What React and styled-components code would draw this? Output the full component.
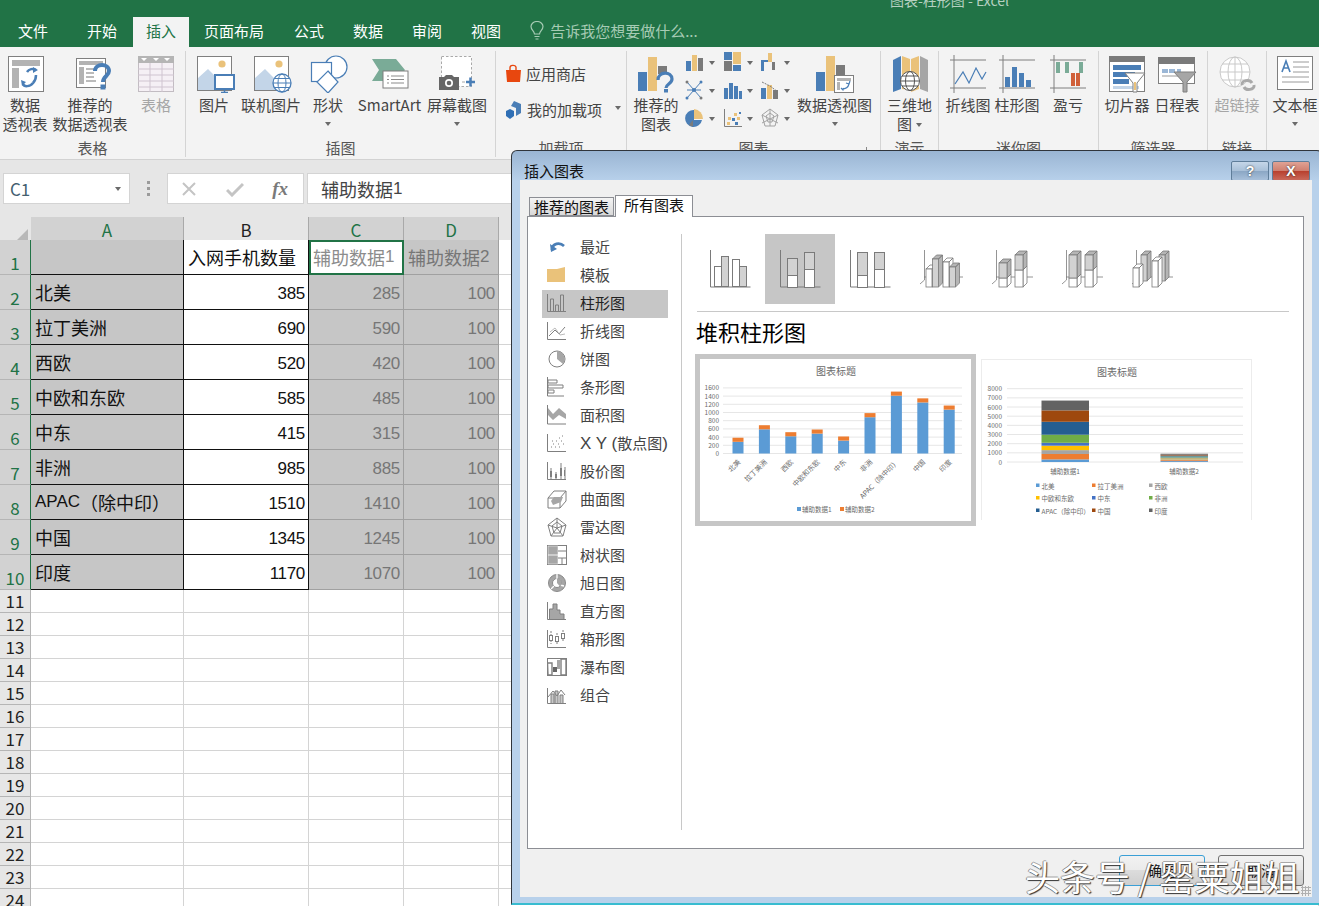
import React from "react";
import styled, { createGlobalStyle } from "styled-components";

const GlobalStyle = createGlobalStyle`
  html, body { margin: 0; padding: 0; overflow: hidden; background: #fff; }
  body { font-family: "Noto Sans CJK SC", "Liberation Sans", sans-serif; }
  * { box-sizing: border-box; }
`;

const Page = styled.div`
  position: relative;
  width: 1319px;
  height: 906px;
  overflow: hidden;
  background: #fff;
`;

/* title + tabs */
const TopBar = styled.div`
  height: 47px;
  background: #217346;
  display: flex;
  flex-direction: column;
`;
const TitleRow = styled.div`
  height: 17px;
  padding-left: 890px;
  line-height: 0;
  font-size: 14px;
  color: #b5d0c0;
`;
const TabBar = styled.div`
  height: 30px;
  display: flex;
  align-items: stretch;
`;
const Tab = styled.div`
  display: flex;
  align-items: center;
  padding: 0 ${p => p.$right ?? 15}px 4px ${p => p.$left ?? 15}px;
  font-size: 15px;
  color: ${p => (p.$active ? "#217346" : "#fff")};
  background: ${p => (p.$active ? "#f3f3f3" : "transparent")};
`;
const TellMe = styled.div`
  display: flex;
  align-items: center;
  gap: 6px;
  margin-left: 14px;
  padding-bottom: 4px;
  font-size: 15px;
  color: #a6cbb4;
`;

/* ribbon */
const Ribbon = styled.div`
  height: 113px;
  padding-top: 4px;
  display: flex;
  background: #f3f3f3;
  border-bottom: 1px solid #d2d2d2;
  overflow: hidden;
`;
const Group = styled.div`
  position: relative;
  width: ${p => p.$w}px;
  flex: none;
  height: 106px;
  display: flex;
  flex-direction: column;
  border-right: ${p => (p.$last ? "none" : "1px solid #d4d4d4")};
`;
const GroupBody = styled.div`
  flex: 1;
  display: flex;
  padding-left: ${p => p.$pad || 0}px;
`;
const GroupLabel = styled.div`
  height: 18px;
  line-height: 18px;
  text-align: center;
  font-size: 15px;
  color: #555;
`;
const Launcher = styled.div`
  position: absolute;
  right: 7px;
  bottom: 3px;
  width: 7px;
  height: 7px;
  border-left: 1px solid #888;
  border-bottom: 1px solid #888;
`;
const RibbonButton = styled.div`
  width: ${p => p.$w}px;
  flex: none;
  padding-top: 3px;
  display: flex;
  flex-direction: column;
  align-items: center;
  font-size: 15px;
  line-height: 19px;
  white-space: nowrap;
  color: ${p => (p.$off ? "#a6a6a6" : "#444")};
`;
const IconSlot = styled.div`
  height: 39px;
  margin-bottom: 2px;
  padding-left: ${p => p.$dx || 0}px;
  display: flex;
  align-items: center;
  justify-content: center;
`;
const Caret = styled.span`
  display: ${p => (p.$inline ? "inline-block" : "block")};
  width: 0;
  height: 0;
  margin: ${p => (p.$inline ? "0 0 3px 4px" : "8px 0")};
  border-left: 3.5px solid transparent;
  border-right: 3.5px solid transparent;
  border-top: 4px solid #6a6a6a;
`;
const AddinList = styled.div`
  padding: 11px 0 0 9px;
  display: flex;
  flex-direction: column;
  gap: 14px;
`;
const AddinRow = styled.div`
  height: 22px;
  display: flex;
  align-items: center;
  gap: 4px;
  font-size: 15px;
  color: #444;
  white-space: nowrap;
`;
const MiniGrid = styled.div`
  width: 107px;
  flex: none;
  display: grid;
  grid-template-columns: repeat(3, 37.5px);
  grid-auto-rows: 28px;
`;
const MiniCell = styled.div`
  display: flex;
  align-items: flex-start;
  gap: 2px;
  padding-top: 1px;
  ${Caret} { margin: 9px 0 0 2px; }
`;

/* formula bar */
const FormulaBar = styled.div`
  height: 57px;
  padding: 13px 0 0 3px;
  display: flex;
  align-items: flex-start;
  background: #e6e6e6;
`;
const NameBox = styled.div`
  width: 127px;
  height: 31px;
  padding: 0 8px 0 6px;
  display: flex;
  align-items: center;
  justify-content: space-between;
  background: #fff;
  border: 1px solid #d4d4d4;
  font-size: 17px;
  color: #44606f;
  ${Caret} { margin: 0; }
`;
const GripDots = styled.div`
  width: 37px;
  height: 31px;
  display: flex;
  flex-direction: column;
  align-items: center;
  justify-content: center;
  gap: 3px;
`;
const GripDot = styled.span`
  width: 3px;
  height: 3px;
  background: #9b9b9b;
`;
const FxBox = styled.div`
  width: 137px;
  height: 31px;
  padding: 0 15px 0 13px;
  display: flex;
  align-items: center;
  justify-content: space-between;
  background: #fff;
  border: 1px solid #d4d4d4;
`;
const FxGlyph = styled.span`
  font-family: "Liberation Serif", serif;
  font-style: italic;
  font-weight: 700;
  font-size: 19px;
  color: #7a7a7a;
`;
const FormulaInput = styled.div`
  flex: 1;
  height: 31px;
  margin-left: 3px;
  padding-left: 13px;
  display: flex;
  align-items: center;
  background: #fff;
  border: 1px solid #d4d4d4;
  font-size: 18px;
  color: #444;
`;

/* sheet */
const Sheet = styled.div`
  display: flex;
  flex-direction: column;
`;
const SheetRow = styled.div`
  display: grid;
  grid-template-columns: 31px 153px 125px 95px 95px 1fr;
  height: ${p => p.$h}px;
`;
const Corner = styled.div`
  background: #e6e6e6;
  display: flex;
  align-items: flex-end;
  justify-content: flex-end;
  padding: 0 3px 3px 0;
`;
const ColHead = styled.div`
  display: flex;
  align-items: center;
  justify-content: center;
  padding-bottom: 2px;
  font-size: 17px;
  background: ${p => (p.$on ? "#d2d2d2" : "#e6e6e6")};
  color: ${p => (p.$on ? "#217346" : "#222")};
  border-right: 1px solid #a9a9a9;
  border-bottom: 2px solid ${p => (p.$on ? "#217346" : "#a9a9a9")};
`;
const RowHead = styled.div`
  display: flex;
  align-items: flex-end;
  justify-content: center;
  font-size: 17px;
  line-height: 22px;
  background: ${p => (p.$on ? "#d2d2d2" : "#e6e6e6")};
  color: ${p => (p.$on ? "#217346" : "#222")};
  border-bottom: 1px solid #b5b5b5;
  border-right: 1px solid ${p => (p.$on ? "#217346" : "#b5b5b5")};
`;
const Cell = styled.div`
  display: flex;
  align-items: flex-end;
  justify-content: ${p => (p.$num ? "flex-end" : "flex-start")};
  padding: 0 ${p => (p.$num ? 3 : 4)}px ${p => (p.$num ? 2 : 4)}px 4px;
  white-space: nowrap;
  overflow: hidden;
  background: ${p => (p.$sel ? "#c6c6c6" : "#fff")};
  color: ${p => p.$color || "#111"};
  font-family: ${p => (p.$num ? '"Liberation Sans"' : '"Noto Sans CJK SC"')}, sans-serif;
  font-size: ${p => (p.$num ? 17 : 18)}px;
  letter-spacing: ${p => (p.$num ? "-0.3px" : "0")};
  line-height: 26px;
  border-right: 1px solid ${p => p.$line || "#d4d4d4"};
  border-bottom: 1px solid ${p => p.$line || "#d4d4d4"};
`;
const ActiveCell = styled(Cell)`
  background: #fff;
  border: 2px solid #217346;
  box-shadow: inset 0 0 0 1px #fff;
  padding: 0 2px 3px 2px;
`;
const Latin = styled.span`
  font-family: "Liberation Sans", sans-serif;
  font-size: 17px;
`;

/* dialog */
const Dialog = styled.div`
  position: absolute;
  left: 511px;
  top: 150px;
  width: 812px;
  height: 755px;
  padding: 0 10px 6px 8px;
  display: flex;
  flex-direction: column;
  background: linear-gradient(180deg, #9ab5d3 0, #b8d1eb 30px, #b8d1eb 100%);
  border: 1px solid #30353b;
  border-bottom: 2px solid #38bcd0;
  border-radius: 6px 6px 0 0;
`;
const DialogHead = styled.div`
  height: 29px;
  flex: none;
  padding: 10px 2px 0 4px;
  display: flex;
  align-items: flex-start;
  justify-content: space-between;
  font-size: 15px;
  line-height: 20px;
  color: #111;
`;
const WindowButtons = styled.div`
  display: flex;
  gap: 3px;
`;
const WindowButton = styled.div`
  width: 38px;
  height: 20px;
  display: flex;
  align-items: center;
  justify-content: center;
  border: 1px solid #5f7d99;
  border-radius: 2px;
  font-family: "Liberation Sans", sans-serif;
  font-weight: 700;
  font-size: 14px;
  color: #fff;
  text-shadow: 0 0 2px #222;
  background: ${p =>
    p.$close
      ? "linear-gradient(180deg, #e0a294 0, #d08070 48%, #b83f2d 50%, #c9695a 100%)"
      : "linear-gradient(180deg, #c5d6e8 0, #a9c0d8 48%, #8aa6c4 50%, #a8c0da 100%)"};
`;
const DialogBody = styled.div`
  position: relative;
  flex: 1;
  padding: 15px 8px 0 7px;
  display: flex;
  flex-direction: column;
  background: #f0f0f0;
`;
const TabStrip = styled.div`
  height: 21px;
  flex: none;
  padding-left: 2px;
  display: flex;
  align-items: flex-end;
`;
const DialogTab = styled.div`
  height: ${p => (p.$active ? 22 : 19)}px;
  margin-bottom: ${p => (p.$active ? -1 : 0)}px;
  padding: 0 ${p => (p.$active ? 8 : 4)}px;
  margin-right: 1px;
  font-size: 15px;
  line-height: 18px;
  color: #111;
  white-space: nowrap;
  position: relative;
  z-index: 1;
  border: 1px solid #8c8e94;
  border-bottom: ${p => (p.$active ? "none" : "1px solid #8c8e94")};
  background: ${p => (p.$active ? "#fff" : "linear-gradient(180deg, #f4f4f4, #d9d9d9)")};
`;
const Panel = styled.div`
  height: 633px;
  flex: none;
  padding-top: 17px;
  display: flex;
  background: #fff;
  border: 1px solid #8c8e94;
`;
const SideList = styled.div`
  width: 154px;
  height: 596px;
  flex: none;
  padding-left: 14px;
  border-right: 1px solid #c8c8c8;
`;
const SideItem = styled.div`
  width: 126px;
  height: 28px;
  padding: 0 0 3px 5px;
  display: flex;
  align-items: center;
  gap: 13px;
  font-size: 15px;
  color: ${p => (p.$active ? "#222" : "#444")};
  background: ${p => (p.$active ? "#c6c6c6" : "transparent")};
  white-space: nowrap;
`;
const SideIcon = styled.span`
  width: 20px;
  height: 20px;
  flex: none;
  display: flex;
`;
const ChartArea = styled.div`
  flex: 1;
  padding-left: 13px;
  display: flex;
  flex-direction: column;
`;
const TypeRow = styled.div`
  display: flex;
`;
const TypeCell = styled.div`
  width: 70px;
  height: 70px;
  background: ${p => (p.$active ? "#c6c6c6" : "transparent")};
`;
const Rule = styled.div`
  height: 1px;
  margin: 7px 14px 0 2px;
  background: #c8c8c8;
`;
const ChartTitle = styled.div`
  height: 42px;
  padding: 0 0 4px 1px;
  display: flex;
  align-items: center;
  font-size: 22px;
  color: #000;
`;
const PreviewRow = styled.div`
  display: flex;
  gap: 5px;
`;
const Preview = styled.div`
  height: ${p => (p.$active ? 172 : 161)}px;
  margin-top: ${p => (p.$active ? 0 : 5)}px;
  border: ${p => (p.$active ? "5px solid #c6c6c6" : "1px solid #ececec")};
  border-bottom: ${p => (p.$active ? "5px solid #c6c6c6" : "none")};
  background: #fff;
  display: flex;
`;
const Footer = styled.div`
  flex: 1;
  padding: 6px 0 0;
  display: flex;
  justify-content: flex-end;
  gap: 13px;
`;
const DialogButton = styled.div`
  width: 86px;
  height: 31px;
  padding-bottom: 2px;
  display: flex;
  align-items: center;
  justify-content: center;
  font-size: 14px;
  color: #111;
  border-radius: 3px;
  border: 1px solid ${p => (p.$primary ? "#3a9fd6" : "#707070")};
  background: linear-gradient(180deg, #f2f2f2 0, #ebebeb 48%, #dcdcdc 50%, #cfcfcf 100%);
`;
const ResizeGrip = styled.div`
  position: absolute;
  right: 1px;
  bottom: 1px;
  width: 10px;
  height: 10px;
  background-image: radial-gradient(#b0b0b0 1px, transparent 1.2px);
  background-size: 3px 3px;
`;
const Watermark = styled.div`
  position: absolute;
  left: 1025px;
  top: 852px;
  font-size: 35px;
  line-height: 48px;
  white-space: nowrap;
  color: #fff;
  text-shadow: 1px 1px 1px #333, -1px 0 0 rgba(80, 80, 80, 0.6), 0 -1px 0 rgba(80, 80, 80, 0.45);
`;

/* ---- drawings ---- */
const G = "#7f7f7f";
const BLUE = "#4a7eb6";
const ORANGE = "#eac27a";
const DARK = "#7a7a7a";
const LBLUE = "#c3d5e8";

const Ic = ({ w = 38, h = 38, children }) => (
  <svg width={w} height={h} viewBox={`0 0 ${w} ${h}`} fill="none">{children}</svg>
);

const PivotIcon = () => (
  <Ic>
    <rect x="1.5" y="1.5" width="35" height="35" fill="#fff" stroke={G} />
    <rect x="5" y="5" width="28" height="6" fill="#b3b3b3" />
    <rect x="5" y="13" width="7" height="20" fill="#b3b3b3" />
    <path d="M16 29c1 3 7 3 10-1M29 15c-3-2-7-1-9 2M29 20c0 3-1 6-3 8" stroke={BLUE} strokeWidth="2.5" />
    <path d="M26 12l5 3-5 3zM15 31l-1-6 5 2z" fill={BLUE} />
  </Ic>
);
const RecoPivotIcon = () => (
  <Ic>
    <rect x="1.5" y="3.5" width="29" height="29" fill="#fff" stroke={G} />
    <rect x="4" y="6" width="24" height="4" fill="#b3b3b3" />
    <rect x="4" y="12" width="5" height="17" fill="#b3b3b3" />
    <path d="M11 14h10M11 18h8M11 22h8M11 26h10" stroke="#bbb" strokeWidth="2" />
    <path d="M20 16c0-8 14-8 14 0 0 5-6 5-6 11" stroke={BLUE} strokeWidth="4" />
    <rect x="25.5" y="29.5" width="5" height="5" fill={BLUE} />
  </Ic>
);
const TableIcon = () => (
  <Ic>
    <rect x="1.5" y="1.5" width="35" height="35" fill="#f5f0f5" stroke="#c2bcc2" />
    <rect x="1" y="1" width="36" height="7" fill="#b5b5b5" />
    <path d="M4 3h6l-3 3zM16 3h6l-3 3zM27 3h6l-3 3z" fill="#fff" />
    <path d="M1 14h36M1 20h36M1 26h36M1 32h36M13 8v29M25 8v29" stroke="#cfc4d0" />
  </Ic>
);
const PictureBase = () => (
  <>
    <rect x="1.5" y="1.5" width="34" height="34" fill="#fff" stroke={G} />
    <circle cx="26" cy="9" r="3.6" fill={ORANGE} />
    <path d="M2 35V23l10-9 9 9h5v12z" fill={LBLUE} />
  </>
);
const PictureIcon = () => (
  <Ic w={40}>
    <PictureBase />
    <rect x="19" y="20" width="19" height="14" fill="#fff" stroke={BLUE} strokeWidth="2" />
    <path d="M28.5 34v3M25 37.5h7" stroke={BLUE} strokeWidth="1.5" />
  </Ic>
);
const OnlinePictureIcon = () => (
  <Ic w={40}>
    <PictureBase />
    <circle cx="29" cy="28" r="9" fill="#fff" stroke={BLUE} strokeWidth="1.3" />
    <ellipse cx="29" cy="28" rx="4" ry="9" stroke={BLUE} />
    <path d="M20 28h18M21.5 23.5h15M21.5 32.5h15" stroke={BLUE} />
  </Ic>
);
const ShapesIcon = () => (
  <Ic w={40}>
    <circle cx="26" cy="12" r="11" fill="#fff" stroke={BLUE} strokeWidth="1.2" />
    <rect x="1.5" y="7.5" width="20" height="19" fill="#fff" stroke={BLUE} strokeWidth="1.2" />
    <path d="M18 16l10 11-10 11-11-11z" fill="#fff" stroke={BLUE} strokeWidth="1.2" />
  </Ic>
);
const SmartArtIcon = () => (
  <Ic>
    <path d="M1 4h24l9 11-9 11H1l7-11z" fill="#7aab97" />
    <rect x="12" y="16" width="25" height="17" fill="#fff" stroke={G} />
    <path d="M16 21h2M16 24.5h2M16 28h2M20 21h13M20 24.5h13M20 28h13" stroke="#8b8b8b" />
  </Ic>
);
const ScreenshotIcon = () => (
  <Ic>
    <rect x="3.5" y="1.5" width="30" height="30" fill="#fff" stroke="#a9a9a9" strokeDasharray="2.5 2" />
    <path d="M1 22h5l2-2h6l2 2h5v13H1z" fill="#666" />
    <circle cx="11" cy="28" r="4" fill="#fff" />
    <circle cx="11" cy="28" r="2.3" fill="#666" />
    <path d="M24 27h3" stroke="#a9a9a9" />
    <path d="M28 27h9M32.5 22.5v9" stroke={BLUE} strokeWidth="2.5" />
  </Ic>
);
const StoreIcon = () => (
  <Ic w={17} h={19}>
    <path d="M1 6h15l-1 12H2z" fill="#e8470f" />
    <path d="M5 7V3.5C5 1 10 .5 11 3v4" stroke="#e8470f" strokeWidth="1.4" />
  </Ic>
);
const AddinIcon = () => (
  <Ic w={18} h={19}>
    <path d="M9 1l7 3v9l-5 3V8L6 6z" fill={BLUE} />
    <path d="M1 11l4-2 4 2v5l-4 3-4-3z" fill="#2f6fb5" />
  </Ic>
);
const RecoChartIcon = () => (
  <Ic>
    <rect x="1" y="17" width="9" height="19" fill={BLUE} />
    <rect x="11" y="2" width="9" height="34" fill={ORANGE} />
    <rect x="21" y="11" width="9" height="8" fill={DARK} />
    <path d="M21 25c0-9 14-9 14-1 0 5-6 5-6 9" stroke={BLUE} strokeWidth="3.2" />
    <rect x="27" y="34" width="4" height="3.5" fill={BLUE} />
  </Ic>
);
const PivotChartIcon = () => (
  <Ic w={40}>
    <rect x="1" y="17" width="9" height="19" fill={BLUE} />
    <rect x="11" y="1" width="9" height="35" fill={ORANGE} />
    <rect x="21" y="10" width="9" height="26" fill={DARK} />
    <rect x="19.5" y="20.5" width="19" height="17" fill="#fff" stroke={G} />
    <rect x="22" y="23" width="14" height="3" fill="#b3b3b3" />
    <rect x="22" y="27" width="3" height="8" fill="#b3b3b3" />
    <path d="M27 34c3 0 6-1 7-5M31 28l3 1 1-3M26 33l2 2 1-2" stroke={BLUE} strokeWidth="1.2" />
  </Ic>
);
const MapIcon = () => (
  <Ic>
    <path d="M2 5l8-4v33l-8 3z" fill={BLUE} />
    <path d="M11 1l8 3v31l-8-1z" fill={ORANGE} />
    <path d="M20 4l8-3v33l-8 3z" fill={ORANGE} />
    <path d="M29 1l8 4v32l-8-3z" fill="#a6a6a6" />
    <circle cx="19" cy="26" r="9.5" fill="#fff" stroke="#555" />
    <ellipse cx="19" cy="26" rx="4.5" ry="9.5" stroke="#555" />
    <path d="M10 26h18M11 21h16M11 31h16" stroke="#555" />
  </Ic>
);
const SparkFrame = ({ children }) => (
  <Ic h={40}>
    <path d="M1 6h36M1 34h36M5 1v38" stroke={G} />
    {children}
  </Ic>
);
const SparkLineIcon = () => (
  <SparkFrame><path d="M6 30l8-12 6 11 7-15 6 11 4-7" stroke={BLUE} strokeWidth="1.2" /></SparkFrame>
);
const SparkBarIcon = () => (
  <SparkFrame>
    <path d="M7 33V23h5v10zM14 33V13h5v20zM21 33V19h5v14zM28 33V26h5v7z" fill={BLUE} />
  </SparkFrame>
);
const SparkWinIcon = () => (
  <SparkFrame>
    <path d="M7 8h4v11H7zM16 8h4v11h-4zM30 8h4v11h-4z" fill="#7aab97" />
    <path d="M22 19h4v13h-4zM27 19h4v13h-4z" fill="#d0603a" />
  </SparkFrame>
);
const SlicerIcon = () => (
  <Ic>
    <rect x="1.5" y="1.5" width="35" height="35" fill="#fff" stroke={G} />
    <rect x="1" y="1" width="36" height="6" fill="#7a7a7a" />
    <rect x="5" y="10" width="28" height="5" fill={BLUE} />
    <rect x="5" y="17" width="22" height="5" fill={BLUE} />
    <rect x="5" y="24" width="16" height="5" fill={BLUE} />
    <rect x="5" y="31" width="26" height="3" fill={LBLUE} />
    <path d="M17 18h20l-8 10v9h-4v-9z" fill="#fff" stroke={G} />
    <path d="M27 27v8" stroke={ORANGE} strokeWidth="2" />
  </Ic>
);
const TimelineIcon = () => (
  <Ic w={40}>
    <rect x="1.5" y="2.5" width="36" height="26" fill="#fff" stroke={G} />
    <rect x="1" y="2" width="37" height="7" fill="#7a7a7a" />
    <path d="M5 14h6v4H5zM12 14h6v4h-6zM20 14h4v4h-4z" fill="#9bb7d6" />
    <path d="M5 21h30" stroke="#ccc" strokeWidth="2" />
    <path d="M17 17h22l-9 10v10h-4V27z" fill="#a6a6a6" stroke={G} />
  </Ic>
);
const LinkIcon = () => (
  <Ic>
    <circle cx="17" cy="17" r="15" fill="#fff" stroke="#c9c9c9" />
    <ellipse cx="17" cy="17" rx="7" ry="15" stroke="#c9c9c9" />
    <path d="M2 17h30M4 9h26M4 25h26M17 2v30" stroke="#c9c9c9" />
    <path d="M24 30c-1-5 8-6 10-2M36 30c1 5-8 6-10 2" stroke="#a9a9a9" strokeWidth="3" />
  </Ic>
);
const TextBoxIcon = () => (
  <Ic>
    <rect x="1.5" y="1.5" width="35" height="33" fill="#fff" stroke={G} />
    <path d="M6 17l4-11 4 11M7.500 13h5" stroke={BLUE} strokeWidth="1.6" />
    <path d="M17 7h16M17 12h16M17 17h16M6 22h27M6 27h27" stroke="#9a9a9a" />
  </Ic>
);

/* 9 small chart buttons */
const Mini = ({ children }) => <Ic w={20} h={20}>{children}</Ic>;
const miniIcons = [
  <Mini key="a"><rect x="1" y="9" width="5" height="10" fill={BLUE} /><rect x="7" y="3" width="5" height="16" fill={ORANGE} /><rect x="13" y="6" width="5" height="13" fill={DARK} /></Mini>,
  <Mini key="b"><rect x="1" y="0" width="8" height="8" fill={BLUE} /><rect x="1" y="9" width="8" height="10" fill={DARK} /><rect x="10" y="0" width="8" height="12" fill={ORANGE} /><rect x="10" y="13" width="8" height="6" fill={BLUE} /></Mini>,
  <Mini key="c"><rect x="1" y="8" width="3" height="11" fill={BLUE} /><rect x="4" y="8" width="4" height="2" fill={BLUE} /><rect x="8" y="1" width="4" height="9" fill={ORANGE} /><rect x="12" y="10" width="3" height="8" fill={DARK} /></Mini>,
  <Mini key="d"><path d="M2 2l7 8 7 8M2 18l7-8 7-8M2 10h14" stroke={BLUE} strokeWidth="1" /><circle cx="9" cy="10" r="2" fill={BLUE} /><circle cx="2" cy="2" r="1.5" fill={DARK} /><circle cx="16" cy="18" r="1.5" fill={DARK} /><circle cx="16" cy="2" r="1.5" fill={BLUE} /><circle cx="2" cy="18" r="1.5" fill={BLUE} /></Mini>,
  <Mini key="e"><rect x="1" y="8" width="4" height="11" fill={BLUE} /><rect x="6" y="3" width="4" height="16" fill={BLUE} /><rect x="11" y="6" width="4" height="13" fill={BLUE} /><rect x="16" y="11" width="3" height="8" fill={BLUE} /></Mini>,
  <Mini key="f"><rect x="1" y="8" width="5" height="11" fill={BLUE} /><rect x="7" y="5" width="5" height="14" fill={ORANGE} /><rect x="13" y="10" width="5" height="9" fill={DARK} /><path d="M2 2l8 4 8 6" stroke={DARK} strokeDasharray="2 1" /></Mini>,
  <Mini key="g"><path d="M9 2a8.500 8.500 0 1 0 8 10H9z" fill={BLUE} /><path d="M9 1v10h9A9.500 9.500 0 0 0 9 1z" fill={ORANGE} /><path d="M8 12L4 17a8 8 0 0 0 4 1.500z" fill={DARK} /></Mini>,
  <Mini key="h"><path d="M1.500 1v17.500H19" stroke={G} /><path d="M5 9h3v3H5zM11 5h3v3h-3zM14 9h3v3h-3zM4 14h3v3H4z" fill={ORANGE} /><path d="M9 10h3v3H9zM12 14h3v3h-3zM16 4h2v2h-2z" fill={BLUE} /></Mini>,
  <Mini key="i"><path d="M10 1l8 6-3 11H5L2 7z M10 5l4 3-2 6H8L6 8zM10 1v17M2 7l16 8M18 7L2 15" stroke="#a2a2a2" strokeWidth="1" /></Mini>,
];

/* dialog left list icons */
const Si = ({ children }) => (
  <SideIcon><svg width="20" height="20" viewBox="0 0 20 20" fill="none">{children}</svg></SideIcon>
);
const GF = "#a6a6a6";
const sideItems = [
  ["最近", <Si key="0"><path d="M4 14c0-7 8-8 12-4" stroke={BLUE} strokeWidth="2.600" transform="translate(1 -1)" /><path d="M3 7l1 8 6-3z" fill={BLUE} /></Si>],
  ["模板", <Si key="1"><path d="M0 4h10l8-2v15H0z" fill={ORANGE} /></Si>],
  ["柱形图", <Si key="2"><path d="M.5 1v17.500H19" stroke={G} /><path d="M3.500 18V6h3v12M8.500 18v-6h3v6M13.500 18V2h3v16" stroke={G} /></Si>],
  ["折线图", <Si key="3"><path d="M.5 1v17.500H19" stroke={G} /><path d="M2 15l6-6 4 4 6-7" stroke={G} /><path d="M3 11l5-4 5 7 5-1" stroke="#bbb" /></Si>],
  ["饼图", <Si key="4"><circle cx="10" cy="10" r="8" stroke={G} /><path d="M10 2a8 8 0 0 1 6 13l-6-5z" fill={GF} /></Si>],
  ["条形图", <Si key="5"><path d="M.5 0v19H17" stroke={G} /><path d="M1 3h9v3H1zM1 8h15v3H1zM1 13h6v3H1z" stroke={G} /></Si>],
  ["面积图", <Si key="6"><path d="M.5 0v19H19" stroke={G} /><path d="M1 3l5 6 6-6 7 6v5l-7-4-6 5-5-5z" fill={GF} /></Si>],
  ["XY", <Si key="7"><path d="M.5 1v17.500H19" stroke={G} /><path d="M4 14h1M6 11h1M9 8h1M12 5h1M15 3h1M8 14h1M11 11h1M14 8h1M5 8h1M12 14h1M16 11h1" stroke={G} strokeDasharray="1 1" /></Si>],
  ["股价图", <Si key="8"><path d="M.5 1v17.500H19" stroke={G} /><path d="M4 7v11M9 11v7M14 2v16M18 6v12" stroke={G} /><path d="M3 10h2v6H3zM8 13h2v4H8zM13 7h2v8h-2zM17 9h1v6h-1z" fill={G} /></Si>],
  ["曲面图", <Si key="9"><path d="M1 9L7 2h12v10l-6 7H1zM1 9h12v10M13 9l6-7" stroke={G} /><path d="M4 12l3-4h9l-2 5-8 3z" fill={GF} /></Si>],
  ["雷达图", <Si key="10"><path d="M10 1l9 7-3 11H4L1 8zM10 5l5 4-2 7H7L5 9zM10 1v10M1 8l9 3 9-3M4 19l6-8 6 8" stroke={G} /></Si>],
  ["树状图", <Si key="11"><rect x=".5" y=".5" width="19" height="19" stroke={G} /><path d="M1 1h10v9H1zM1 10h10v9H1z" fill={GF} stroke="#fff" strokeWidth=".5" /><path d="M11 6h8M11 13h8M15 13v6" stroke={G} /></Si>],
  ["旭日图", <Si key="12"><circle cx="10" cy="10" r="8.500" fill={GF} stroke="#8a8a8a" /><circle cx="10" cy="10" r="4.500" fill="#fff" stroke="#8a8a8a" /><path d="M10 1v5M4 16l3-3M17 13l-4-1" stroke="#fff" strokeWidth="1.300" /><path d="M10 10V5.500a4.500 4.500 0 0 1 3 8z" fill={GF} /></Si>],
  ["直方图", <Si key="13"><path d="M.5 1v17.500H19" stroke={G} /><path d="M2.500 18V8h3.500V3h4v6h3v4h4v5" fill={GF} stroke={G} /></Si>],
  ["箱形图", <Si key="14"><path d="M.5 1v17.500H19" stroke={G} /><path d="M4 2v13M10 4v12M16 1v12" stroke={G} strokeDasharray="2 1" /><rect x="2.500" y="6.500" width="3" height="5" fill="#fff" stroke={G} /><rect x="8.500" y="7.500" width="3" height="5" fill="#fff" stroke={G} /><rect x="14.500" y="4.500" width="3" height="5" fill="#fff" stroke={G} /></Si>],
  ["瀑布图", <Si key="15"><rect x=".5" y="1.500" width="19" height="17" stroke={G} /><path d="M.5 6H5v12H1zM14 2h5v16h-5z" stroke={G} strokeWidth="1.400" /><path d="M6 10h4v5H6z" fill="#666" /><path d="M10 3h4v9h-4z" fill={GF} /></Si>],
  ["组合", <Si key="16"><path d="M.5 3v15.500H19" stroke={G} /><path d="M4 18V9h3v9M8 18V6h3v12M13 18v-8h3v8" fill="#c8c8c8" stroke={G} /><path d="M1 12l5-6 4 5 4-6 4 5" stroke={G} /></Si>],
];

/* chart-type row */
const T = ({ children }) => <svg width="70" height="70" viewBox="0 0 70 70" fill="none">{children}</svg>;
const Axis = ({ x = 15, right = 55 }) => <path d={`M${x + 0.5} 16v37h${right - x}`} stroke={DARK} />;
const GREY = "#d2d2d2";
const Col = ({ x, top, mid, w = 10, base = 53 }) => (
  <>
    <rect x={x + 0.5} y={top + 0.5} width={w} height={mid - top} fill={GREY} stroke={DARK} />
    <rect x={x + 0.5} y={mid + 0.5} width={w} height={base - mid} fill="#fff" stroke={DARK} />
  </>
);
const Box3D = ({ x, top, bottom = 53, w = 6, fill }) => (
  <>
    <path d={`M${x} ${top}l4-4h${w}l-4 4zM${x + w} ${top}l4-4v${bottom - top}l-4 4z`} fill={fill === "#fff" ? "#fff" : "#b5b5b5"} stroke={DARK} strokeWidth=".8" />
    <rect x={x} y={top} width={w} height={bottom - top} fill={fill} stroke={DARK} strokeWidth=".8" />
  </>
);
const Axis3D = ({ x }) => <path d={`M${x + 0.5} 16v30L${x - 4} 50M${x} 43h${55 - x + 3}`} stroke={DARK} strokeWidth=".8" />;
const typeIcons = [
  <T key="0">
    <Axis />
    <rect x="19.500" y="32.500" width="7" height="20" fill="#fff" stroke={DARK} />
    <rect x="26.500" y="22.500" width="7" height="30" fill={GREY} stroke={DARK} />
    <rect x="37.500" y="25.500" width="7" height="27" fill="#fff" stroke={DARK} />
    <rect x="44.500" y="32.500" width="7" height="20" fill={GREY} stroke={DARK} />
  </T>,
  <T key="1"><Axis /><Col x={22} top={24} mid={41} /><Col x={39} top={18} mid={35} /></T>,
  <T key="2"><Axis /><Col x={22} top={18} mid={41} /><Col x={39} top={18} mid={35} /></T>,
  <T key="3">
    <Axis3D x={19} />
    <Box3D x={21} top={35} fill="#fff" /><Box3D x={27.500} top={25} fill={GREY} />
    <Box3D x={38} top={28} fill="#fff" /><Box3D x={44.500} top={33} fill={GREY} />
  </T>,
  <T key="4">
    <Axis3D x={21} />
    <Box3D x={24} w={8} top={44} fill="#fff" /><Box3D x={24} w={8} top={29} bottom={44} fill={GREY} />
    <Box3D x={40} w={8} top={36} fill="#fff" /><Box3D x={40} w={8} top={21} bottom={36} fill={GREY} />
  </T>,
  <T key="5">
    <Axis3D x={21} />
    <Box3D x={24} w={8} top={44} fill="#fff" /><Box3D x={24} w={8} top={21} bottom={44} fill={GREY} />
    <Box3D x={40} w={8} top={36} fill="#fff" /><Box3D x={40} w={8} top={21} bottom={36} fill={GREY} />
  </T>,
  <T key="6">
    <Axis3D x={21} />
    <Box3D x={26} top={21} bottom={47} fill={GREY} /><Box3D x={44} top={21} bottom={47} fill={GREY} />
    <Box3D x={18} top={34} fill="#fff" /><Box3D x={37} top={27} fill="#fff" />
  </T>,
];

/* sheet data */
const rows = [
  ["北美", 385, 285, 100],
  ["拉丁美洲", 690, 590, 100],
  ["西欧", 520, 420, 100],
  ["中欧和东欧", 585, 485, 100],
  ["中东", 415, 315, 100],
  ["非洲", 985, 885, 100],
  ["APAC（除中印）", 1510, 1410, 100],
  ["中国", 1345, 1245, 100],
  ["印度", 1170, 1070, 100],
];

const SERIES = ["#5b9bd5", "#ed7d31", "#a5a5a5", "#ffc000", "#4472c4", "#70ad47", "#255e91", "#9e480e", "#636363"];
const CHART_TEXT = { fontFamily: '"Noto Sans CJK SC", sans-serif', fontSize: 6.500, fill: "#6b6b6b" };
const ChartHeading = ({ x }) => (
  <text x={x} y="16" textAnchor="middle" style={{ ...CHART_TEXT, fontSize: 10 }}>图表标题</text>
);

const ChartByRegion = () => {
  const y0 = 94.500;
  const k = 65.600 / 1600;
  return (
    <svg width="271" height="162" viewBox="0 0 271 162">
      <ChartHeading x={136} />
      {[0, 200, 400, 600, 800, 1000, 1200, 1400, 1600].map(v => (
        <g key={v}>
          <line x1="23" x2="262" y1={y0 - v * k} y2={y0 - v * k} stroke="#e6e6e6" />
          <text x="19" y={y0 - v * k + 2.500} textAnchor="end" style={CHART_TEXT}>{v}</text>
        </g>
      ))}
      {rows.map((r, i) => {
        const cx = 38 + i * 26.400;
        return (
          <g key={r[0]}>
            <rect x={cx - 5.500} y={y0 - r[2] * k} width="11" height={r[2] * k} fill={SERIES[0]} />
            <rect x={cx - 5.500} y={y0 - (r[2] + r[3]) * k} width="11" height={r[3] * k} fill={SERIES[1]} />
            <text transform={`translate(${cx + 3} ${y0 + 9}) rotate(-45)`} textAnchor="end" style={{ ...CHART_TEXT, fontSize: 7 }}>{r[0]}</text>
          </g>
        );
      })}
      <rect x="97" y="148" width="4" height="4" fill={SERIES[0]} />
      <text x="102" y="152.500" style={CHART_TEXT}>辅助数据1</text>
      <rect x="140" y="148" width="4" height="4" fill={SERIES[1]} />
      <text x="145" y="152.500" style={CHART_TEXT}>辅助数据2</text>
    </svg>
  );
};

const ChartBySeries = () => {
  const y0 = 102;
  const k = 73.300 / 8000;
  const stack = (x, pick) => {
    let acc = 0;
    return rows.map((r, i) => {
      const h = pick(r) * k;
      const y = y0 - (acc + pick(r)) * k;
      acc += pick(r);
      return <rect key={i} x={x} y={y} width="47.500" height={h} fill={SERIES[i]} />;
    });
  };
  const legendX = [55, 111, 168];
  return (
    <svg width="269" height="160" viewBox="1 0 269 160">
      <ChartHeading x={136} />
      {[0, 1000, 2000, 3000, 4000, 5000, 6000, 7000, 8000].map(v => (
        <g key={v}>
          <line x1="26" x2="262" y1={y0 - v * k} y2={y0 - v * k} stroke="#e6e6e6" />
          <text x="21" y={y0 - v * k + 2.500} textAnchor="end" style={CHART_TEXT}>{v}</text>
        </g>
      ))}
      {stack(60.500, r => r[2])}
      {stack(179.500, r => r[3])}
      <text x="84" y="114" textAnchor="middle" style={CHART_TEXT}>辅助数据1</text>
      <text x="203" y="114" textAnchor="middle" style={CHART_TEXT}>辅助数据2</text>
      {rows.map((r, i) => {
        const x = legendX[i % 3];
        const y = 127 + Math.floor(i / 3) * 12.500;
        return (
          <g key={r[0]}>
            <rect x={x} y={y - 3.500} width="3.500" height="3.500" fill={SERIES[i]} />
            <text x={x + 5.500} y={y + 1.500} style={CHART_TEXT}>{r[0]}</text>
          </g>
        );
      })}
    </svg>
  );
};

const Bulb = () => (
  <svg width="14" height="19" viewBox="0 0 14 19" fill="none" stroke="#a6cbb4" strokeWidth="1.200">
    <path d="M4.500 13c0-3-3.500-4-3.500-7.500a6 5 0 0 1 12 0C13 9 9.500 10 9.500 13zM4.500 15.500h5M5.500 18h3" />
  </svg>
);

const Btn = ({ w, icon, off, caret, lines, dx }) => (
  <RibbonButton $w={w} $off={off}>
    <IconSlot $dx={dx}>{icon}</IconSlot>
    {lines.map(l => <div key={l}>{l}</div>)}
    {caret && <Caret />}
  </RibbonButton>
);

export default function App() {
  return (
    <Page>
      <GlobalStyle />

      <TopBar>
        <TitleRow>图表-柱形图 - Excel</TitleRow>
        <TabBar>
          <Tab $left={18} $right={24}>文件</Tab>
          <Tab $right={16}>开始</Tab>
          <Tab $active $left={13} $right={13}>插入</Tab>
          <Tab $right={16}>页面布局</Tab>
          <Tab $left={14} $right={15}>公式</Tab>
          <Tab $left={14} $right={15}>数据</Tab>
          <Tab $left={14} $right={15}>审阅</Tab>
          <Tab $left={14} $right={15}>视图</Tab>
          <TellMe><Bulb />告诉我您想要做什么...</TellMe>
        </TabBar>
      </TopBar>

      <Ribbon>
        <Group $w={186}>
          <GroupBody>
            <Btn w={50} dx={2} icon={<PivotIcon />} lines={["数据", "透视表"]} />
            <Btn w={80} dx={8} icon={<RecoPivotIcon />} lines={["推荐的", "数据透视表"]} />
            <Btn w={52} off icon={<TableIcon />} lines={["表格"]} />
          </GroupBody>
          <GroupLabel>表格</GroupLabel>
        </Group>
        <Group $w={310}>
          <GroupBody>
            <Btn w={56} dx={4} icon={<PictureIcon />} lines={["图片"]} />
            <Btn w={58} dx={4} icon={<OnlinePictureIcon />} lines={["联机图片"]} />
            <Btn w={56} dx={4} icon={<ShapesIcon />} lines={["形状"]} caret />
            <Btn w={67} icon={<SmartArtIcon />} lines={["SmartArt"]} />
            <Btn w={68} icon={<ScreenshotIcon />} lines={["屏幕截图"]} caret />
          </GroupBody>
          <GroupLabel>插图</GroupLabel>
        </Group>
        <Group $w={131}>
          <GroupBody>
            <AddinList>
              <AddinRow><StoreIcon />应用商店</AddinRow>
              <AddinRow><AddinIcon />我的加载项<Caret $inline style={{ marginLeft: 9 }} /></AddinRow>
            </AddinList>
          </GroupBody>
          <GroupLabel>加载项</GroupLabel>
        </Group>
        <Group $w={254}>
          <GroupBody>
            <Btn w={58} icon={<RecoChartIcon />} lines={["推荐的", "图表"]} />
            <MiniGrid>
              {miniIcons.map(ic => <MiniCell key={ic.key}>{ic}<Caret /></MiniCell>)}
            </MiniGrid>
            <Btn w={85} icon={<PivotChartIcon />} lines={["数据透视图"]} caret />
          </GroupBody>
          <GroupLabel>图表</GroupLabel>
          <Launcher />
        </Group>
        <Group $w={58}>
          <GroupBody>
            <RibbonButton $w={57}>
              <IconSlot><MapIcon /></IconSlot>
              <div>三维地</div>
              <div>图<Caret $inline /></div>
            </RibbonButton>
          </GroupBody>
          <GroupLabel>演示</GroupLabel>
        </Group>
        <Group $w={160}>
          <GroupBody $pad={3}>
            <Btn w={52} icon={<SparkLineIcon />} lines={["折线图"]} />
            <Btn w={46} icon={<SparkBarIcon />} lines={["柱形图"]} />
            <Btn w={56} icon={<SparkWinIcon />} lines={["盈亏"]} />
          </GroupBody>
          <GroupLabel>迷你图</GroupLabel>
        </Group>
        <Group $w={109}>
          <GroupBody>
            <Btn w={56} icon={<SlicerIcon />} lines={["切片器"]} />
            <Btn w={44} icon={<TimelineIcon />} lines={["日程表"]} />
          </GroupBody>
          <GroupLabel>筛选器</GroupLabel>
        </Group>
        <Group $w={59}>
          <GroupBody>
            <Btn w={58} off icon={<LinkIcon />} lines={["超链接"]} />
          </GroupBody>
          <GroupLabel>链接</GroupLabel>
        </Group>
        <Group $w={56} $last>
          <GroupBody>
            <Btn w={56} icon={<TextBoxIcon />} lines={["文本框"]} caret />
          </GroupBody>
          <GroupLabel />
        </Group>
      </Ribbon>

      <FormulaBar>
        <NameBox>C1<Caret /></NameBox>
        <GripDots><GripDot /><GripDot /><GripDot /></GripDots>
        <FxBox>
          <svg width="16" height="16" viewBox="0 0 16 16" stroke="#c4c4c4" strokeWidth="2"><path d="M2 2l12 12M14 2L2 14" /></svg>
          <svg width="18" height="16" viewBox="0 0 18 16" stroke="#c4c4c4" strokeWidth="3" fill="none"><path d="M1 9l5 5L17 3" /></svg>
          <FxGlyph>fx</FxGlyph>
        </FxBox>
        <FormulaInput>辅助数据<Latin>1</Latin></FormulaInput>
      </FormulaBar>

      <Sheet>
        <SheetRow $h={23}>
          <Corner>
            <svg width="14" height="14" viewBox="0 0 14 14"><path d="M14 0v14H0z" fill="#b8b8b8" /></svg>
          </Corner>
          <ColHead $on>A</ColHead>
          <ColHead>B</ColHead>
          <ColHead $on>C</ColHead>
          <ColHead $on>D</ColHead>
          <Corner />
        </SheetRow>

        <SheetRow $h={35}>
          <RowHead $on>1</RowHead>
          <Cell $sel $line="#111" />
          <Cell $line="#111">入网手机数量</Cell>
          <ActiveCell $color="#8c8c8c">辅助数据<Latin>1</Latin></ActiveCell>
          <Cell $sel $line="#a0a0a0" $color="#767676">辅助数据<Latin>2</Latin></Cell>
          <Cell />
        </SheetRow>

        {rows.map((r, i) => (
          <SheetRow key={r[0]} $h={35}>
            <RowHead $on>{i + 2}</RowHead>
            <Cell $sel $line="#111">
              {r[0].startsWith("APAC") ? <><Latin>APAC</Latin>（除中印）</> : r[0]}
            </Cell>
            <Cell $num $line="#111">{r[1]}</Cell>
            <Cell $num $sel $line="#a0a0a0" $color="#767676">{r[2]}</Cell>
            <Cell $num $sel $line="#a0a0a0" $color="#767676">{r[3]}</Cell>
            <Cell />
          </SheetRow>
        ))}

        {Array.from({ length: 14 }, (_, i) => (
          <SheetRow key={i} $h={23}>
            <RowHead>{i + 11}</RowHead>
            <Cell /><Cell /><Cell /><Cell /><Cell />
          </SheetRow>
        ))}
      </Sheet>

      <Dialog>
        <DialogHead>
          <span>插入图表</span>
          <WindowButtons>
            <WindowButton>?</WindowButton>
            <WindowButton $close>X</WindowButton>
          </WindowButtons>
        </DialogHead>
        <DialogBody>
          <TabStrip>
            <DialogTab>推荐的图表</DialogTab>
            <DialogTab $active>所有图表</DialogTab>
          </TabStrip>
          <Panel>
            <SideList>
              {sideItems.map(([label, icon]) => (
                <SideItem key={label} $active={label === "柱形图"}>
                  {icon}
                  {label === "XY" ? <span><Latin>X Y (</Latin>散点图<Latin>)</Latin></span> : label}
                </SideItem>
              ))}
            </SideList>
            <ChartArea>
              <TypeRow>
                {typeIcons.map((ic, i) => <TypeCell key={ic.key} $active={i === 1}>{ic}</TypeCell>)}
              </TypeRow>
              <Rule />
              <ChartTitle>堆积柱形图</ChartTitle>
              <PreviewRow>
                <Preview $active><ChartByRegion /></Preview>
                <Preview><ChartBySeries /></Preview>
              </PreviewRow>
            </ChartArea>
          </Panel>
          <Footer>
            <DialogButton $primary>确定</DialogButton>
            <DialogButton>取消</DialogButton>
          </Footer>
          <ResizeGrip />
        </DialogBody>
      </Dialog>

      <Watermark>头条号 / 罂粟姐姐</Watermark>
    </Page>
  );
}
